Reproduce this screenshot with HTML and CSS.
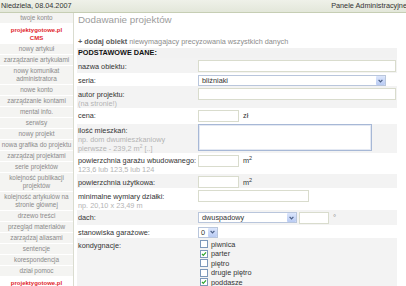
FILE: index.html
```html
<!DOCTYPE html>
<html>
<head>
  <meta charset="utf-8">
  <title>Panele Administracyjne</title>
  <link rel="stylesheet" href="styles.css">
</head>
<body>
<div class="page">
  <div class="topbar">
    <span>Niedziela, 08.04.2007</span>
    <span>Panele Administracyjne</span>
  </div>

  <div class="layout">
    <ul class="menu">
      <li>twoje konto</li>
      <li class="brand">projektygotowe.pl<br>CMS</li>
      <li>nowy artykuł</li>
      <li>zarządzanie artykułami</li>
      <li>nowy komunikat<br>administratora</li>
      <li>nowe konto</li>
      <li>zarządzanie kontami</li>
      <li>mental info.</li>
      <li>serwisy</li>
      <li>nowy projekt</li>
      <li>nowa grafika do projektu</li>
      <li>zarządzaj projektami</li>
      <li>serie projektów</li>
      <li>kolejność publikacji<br>projektów</li>
      <li>kolejność artykułów na<br>stronie głównej</li>
      <li>drzewo treści</li>
      <li>przegląd materiałów</li>
      <li>zarządzaj aliasami</li>
      <li>sentencje</li>
      <li>korespondencja</li>
      <li>dział pomoc</li>
      <li class="brand">projektygotowe.pl</li>
    </ul>

    <div class="content">
      <h1>Dodawanie projektów</h1>
      <p class="intro"><b>+ dodaj obiekt</b> niewymagajacy precyzowania wszystkich danych</p>

      <table class="form">
        <tr class="head"><td colspan="2">PODSTAWOWE DANE:</td></tr>
        <tr class="alt r15">
          <td class="lbl">nazwa obiektu:</td>
          <td><input type="text" class="wide"></td>
        </tr>
        <tr class="r12">
          <td class="lbl">seria:</td>
          <td>
            <span class="select seria"><span class="select-val">bliźniaki</span><span class="select-btn"><svg width="5" height="4" viewBox="0 0 5 4"><path d="M0.6 0.8 L2.5 2.9 L4.4 0.8" fill="none" stroke="#4b5f86" stroke-width="1.2"/></svg></span></span>
          </td>
        </tr>
        <tr class="alt r21">
          <td class="lbl">autor projektu:<br><span class="hint">(na stronie!)</span></td>
          <td><input type="text" class="wide"></td>
        </tr>
        <tr class="r16">
          <td class="lbl">cena:</td>
          <td><input type="text" class="short"><span class="unit">zł</span></td>
        </tr>
        <tr class="alt r29">
          <td class="lbl">ilość mieszkań:<br><span class="hint">np. dom dwumieszkaniowy<br>pierwsze - 239,2 m<sup>2</sup> [..]</span></td>
          <td><textarea></textarea></td>
        </tr>
        <tr class="r20">
          <td class="lbl">powierzchnia garażu wbudowanego:<br><span class="hint">123,6 lub 123,5 lub 124</span></td>
          <td><input type="text" class="short"><span class="unit">m<sup>2</sup></span></td>
        </tr>
        <tr class="alt r14">
          <td class="lbl">powierzchnia użytkowa:</td>
          <td><input type="text" class="short"><span class="unit">m<sup>2</sup></span></td>
        </tr>
        <tr class="r20">
          <td class="lbl">minimalne wymiary działki:<br><span class="hint">np. 20,10 x 23,49 m</span></td>
          <td><input type="text" class="mid"></td>
        </tr>
        <tr class="alt r15">
          <td class="lbl">dach:</td>
          <td>
            <span class="select dach"><span class="select-val">dwuspadowy</span><span class="select-btn"><svg width="5" height="4" viewBox="0 0 5 4"><path d="M0.6 0.8 L2.5 2.9 L4.4 0.8" fill="none" stroke="#4b5f86" stroke-width="1.2"/></svg></span></span><input type="text" class="angle"><span class="deg">°</span>
          </td>
        </tr>
        <tr class="r13">
          <td class="lbl">stanowiska garażowe:</td>
          <td>
            <span class="select tiny"><span class="select-val">0</span><span class="select-btn"><svg width="5" height="4" viewBox="0 0 5 4"><path d="M0.6 0.8 L2.5 2.9 L4.4 0.8" fill="none" stroke="#4b5f86" stroke-width="1.2"/></svg></span></span>
          </td>
        </tr>
        <tr class="alt r50">
          <td class="lbl">kondygnacje:</td>
          <td>
            <div class="checks">
              <div><svg class="cb" width="8" height="8" viewBox="0 0 8 8"><rect x="0.5" y="0.5" width="7" height="7" fill="#fff" stroke="#7d98ba"/></svg>piwnica</div>
              <div><svg class="cb" width="8" height="8" viewBox="0 0 8 8"><rect x="0.5" y="0.5" width="7" height="7" fill="#fff" stroke="#7d98ba"/><path d="M2 3.9 L3.3 5.4 L6 2.4" fill="none" stroke="#2aa32a" stroke-width="1.2"/></svg>parter</div>
              <div><svg class="cb" width="8" height="8" viewBox="0 0 8 8"><rect x="0.5" y="0.5" width="7" height="7" fill="#fff" stroke="#7d98ba"/></svg>piętro</div>
              <div><svg class="cb" width="8" height="8" viewBox="0 0 8 8"><rect x="0.5" y="0.5" width="7" height="7" fill="#fff" stroke="#7d98ba"/></svg>drugie piętro</div>
              <div><svg class="cb" width="8" height="8" viewBox="0 0 8 8"><rect x="0.5" y="0.5" width="7" height="7" fill="#fff" stroke="#7d98ba"/><path d="M2 3.9 L3.3 5.4 L6 2.4" fill="none" stroke="#2aa32a" stroke-width="1.2"/></svg>poddasze</div>
            </div>
          </td>
        </tr>
        <tr class="r15">
          <td class="lbl"></td>
          <td><input type="text" class="wide"></td>
        </tr>
      </table>
    </div>
  </div>
</div>
</body>
</html>
```

FILE: styles.css
```css
body { margin: 0; overflow: hidden; font-family: "Liberation Sans", Arial, sans-serif; background: #fff; color: #333; }
.page { width: 408px; }

/* top bar */
.topbar { display: flex; justify-content: space-between; height: 12px; line-height: 12px; padding: 0 1px;
          font-size: 7.3px; color: #333; background: linear-gradient(#eff1e9, #e3e7da); border-bottom: 1px solid #c6ceb4; }

.layout { display: flex; align-items: flex-start; }

/* left menu */
.menu { list-style: none; margin: 0; padding: 0; width: 73px; flex-shrink: 0; border-right: 1px solid #dadcd0; background: #f4f4f2; }
.menu li { padding: 1px 0; line-height: 8px; font-size: 6.4px; color: #8a8a8a; text-align: center; border-bottom: 1px solid #fff; }
.menu li.brand { background: #fff; color: #e1252b; font-weight: bold; font-size: 6px; padding-top: 2px; padding-bottom: 1px; }
.menu li.brand:first-of-type { }

/* content */
.content { flex: 1; padding-left: 3px; }
h1 { margin: 1px 0 0 1px; font-size: 9.8px; line-height: 12px; font-weight: normal; color: #9c9c9c; }
.intro { margin: 11px 0 0 1px; font-size: 7.3px; line-height: 9px; color: #8c8c8c; }
.intro b { color: #5a5a5a; }

.form { width: 320px; margin-top: 2px; border-collapse: collapse; font-size: 7.3px; }
.form td { padding: 2px 0 0 0; vertical-align: baseline; line-height: 9px; }
.form td.lbl { width: 120px; padding-left: 1px; color: #333; }
.form .head td { height: 10px; padding: 0 0 0 1px; line-height: 10px; font-weight: bold; color: #111; background: #f2f2f2; vertical-align: middle; }
.form .alt td { background: #f3f3f3; }
.r12 { height: 12px; }
.r13 { height: 13px; }
.r14 { height: 14px; }
.r15 { height: 15px; }
.r16 { height: 16px; }
.r20 { height: 20px; }
.r21 { height: 21px; }
.r29 { height: 29px; }
.r50 { height: 50px; }
.hint { color: #b4b4b4; }
sup { font-size: 5px; line-height: 0; vertical-align: 3px; }

input[type=text] { box-sizing: border-box; height: 12px; margin: 0; padding: 0 2px; border: 1px solid #d9dccd; background: #fff;
                   font: 7.3px "Liberation Sans", Arial, sans-serif; vertical-align: baseline; }
input.wide { width: 198px; }
input.short { width: 41px; }
input.mid { width: 111px; }
input.angle { width: 30px; margin-left: 2px; }
textarea { display: inline-block; box-sizing: border-box; width: 174px; height: 27px; margin: -2px 0 0 0; padding: 0; resize: none;
           border: 1px solid #a7b8d6; box-shadow: inset 0 0 0 1px #e4e9f3; vertical-align: top; }
.unit { margin-left: 4px; color: #333; }
.unit sup { font-size: 5.5px; }
.deg { margin-left: 4px; color: #8a8a8a; font-size: 8px; }

/* selects drawn by hand */
.select { display: inline-flex; align-items: center; box-sizing: border-box; height: 11px; border: 1px solid #b9c6dc; background: #fff; vertical-align: baseline; }
.select-val { flex: 1; padding-left: 3px; line-height: 9px; color: #333; }
.select-btn { display: flex; align-items: center; justify-content: center; width: 9px; height: 9px; border-radius: 1px;
              background: linear-gradient(#dce6fc, #b9cbf3); }
.select.seria { width: 188px; }
.select.dach { width: 99px; }
.select.tiny { width: 20px; }
.select.tiny .select-val { padding-left: 2px; }

/* checkboxes */
.checks { padding-left: 2px; }
.checks div { display: flex; align-items: center; height: 9.5px; line-height: 9.5px; color: #333; }
.cb { margin-right: 3px; flex-shrink: 0; }
```
